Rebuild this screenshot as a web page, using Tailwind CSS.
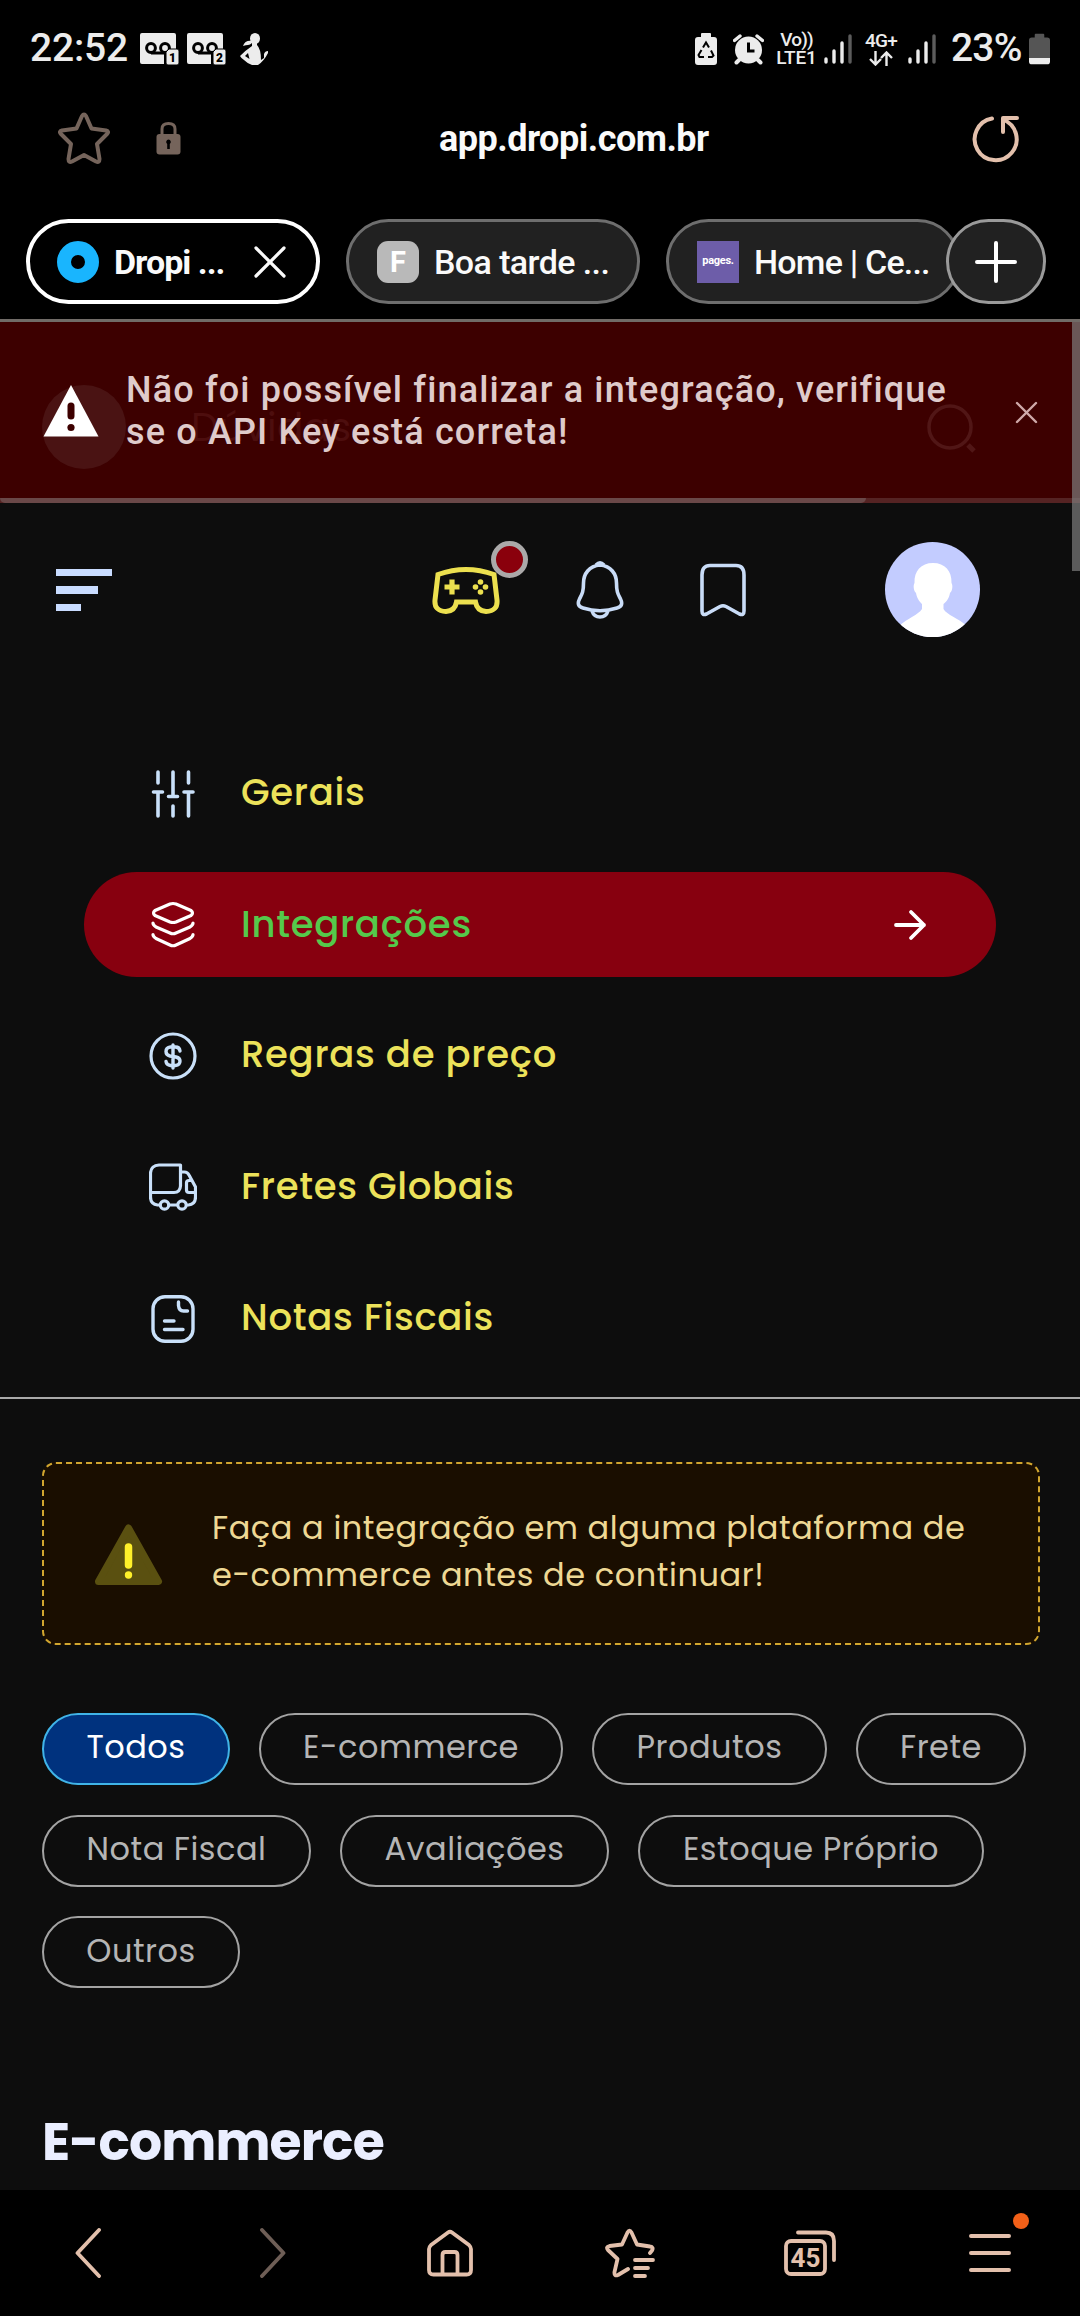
<!DOCTYPE html>
<html lang="pt-BR">
<head>
    <meta charset="UTF-8">
    <meta name="viewport" content="width=device-width, initial-scale=1.0">
    <title>Dropi - Integrações</title>
    <script src="https://cdn.jsdelivr.net/npm/@tailwindcss/browser@4"></script>
</head>
<body class="bg-black">
<div class="w-[1080px] h-[2316px] flex flex-col overflow-hidden bg-black font-['Roboto',sans-serif]">

    <!-- Status bar -->
    <div class="h-[97px] shrink-0 flex items-center pl-[30px] pr-[30px] text-[#ececec]">
        <span class="w-[110px] text-[39px] font-medium tracking-[-0.2px] whitespace-nowrap">22:52</span>
        <svg class="w-[39px] h-[32px]" viewBox="0 0 39 32">
            <path d="M2 0H34Q36 0 36 2V16H27Q24 16 24 19V31H2Q0 31 0 29V2Q0 0 2 0Z" fill="#ececec"/>
            <path d="M11 20H29" stroke="#000" stroke-width="3"/>
            <circle cx="11" cy="15" r="4.4" fill="#ececec" stroke="#000" stroke-width="3"/><circle cx="25" cy="15" r="4.4" fill="#ececec" stroke="#000" stroke-width="3"/>
            <path d="M29 16H37Q39 16 39 18V30Q39 32 37 32H28Q26 32 26 30V19Z" fill="#ececec" stroke="#000" stroke-width="1"/>
            <text x="32.500" y="28.500" font-size="12" font-weight="900" text-anchor="middle" fill="#000">1</text>
        </svg>
        <svg class="ml-[8px] w-[39px] h-[32px]" viewBox="0 0 39 32">
            <path d="M2 0H34Q36 0 36 2V16H27Q24 16 24 19V31H2Q0 31 0 29V2Q0 0 2 0Z" fill="#ececec"/>
            <path d="M11 20H29" stroke="#000" stroke-width="3"/>
            <circle cx="11" cy="15" r="4.4" fill="#ececec" stroke="#000" stroke-width="3"/><circle cx="25" cy="15" r="4.4" fill="#ececec" stroke="#000" stroke-width="3"/>
            <path d="M29 16H37Q39 16 39 18V30Q39 32 37 32H28Q26 32 26 30V19Z" fill="#ececec" stroke="#000" stroke-width="1"/>
            <text x="32.500" y="28.500" font-size="12" font-weight="900" text-anchor="middle" fill="#000">2</text>
        </svg>
        <svg class="ml-[14px] w-[28px] h-[32px]" viewBox="0 0 28 32" fill="#ececec">
            <ellipse cx="15" cy="5.500" rx="5" ry="5.500"/>
            <path d="M12 8Q5 7 3 13Q6 12 8 12Q10 12 12 10V13Q6 17 0 23Q1 25 4 27Q8 31 12 32H18Q24 28 28 20V18Q25 18 24 21V25L21 27Q21 16 17 12V8Z"/>
            <path d="M5 23L8 20L9.500 26Z" fill="#000"/>
        </svg>

        <svg class="ml-auto w-[22px] h-[32px]" viewBox="0 0 22 32">
            <path d="M7 0H15Q16 0 16 1V4H19Q22 4 22 7V29Q22 32 19 32H3Q0 32 0 29V7Q0 4 3 4H6V1Q6 0 7 0Z" fill="#ececec"/>
            <path d="M8 14.500L11 9.500L14 14.500M16 17.500L18.500 22.500L17 24H13M9 24H4.500L3.500 22L6.500 17" fill="none" stroke="#000" stroke-width="2"/>
        </svg>
        <svg class="ml-[16px] w-[31px] h-[32px]" viewBox="0 0 31 32" fill="none">
            <circle cx="15.500" cy="17" r="13.500" fill="#ececec"/>
            <path d="M1.500 7.500L7 3M29.500 7.500L24 3" stroke="#ececec" stroke-width="3.400" stroke-linecap="round"/>
            <path d="M6 27L3.500 29.500M25 27L27.500 29.500" stroke="#ececec" stroke-width="4" stroke-linecap="round"/>
            <path d="M15.500 9.500V18H21.500" stroke="#000" stroke-width="3"/>
        </svg>
        <div class="ml-[12px] w-[41px] flex flex-col items-center font-medium leading-[18px] whitespace-nowrap">
            <span class="text-[19px] tracking-[-0.8px]">Vo))</span>
            <span class="text-[19px] tracking-[-0.2px]">LTE1</span>
        </div>
        <svg class="ml-[7px] mr-[1px] w-[28px] h-[32px]" viewBox="0 0 28 32" stroke-width="3.400" stroke-linecap="round" stroke="#ececec">
            <path d="M2 26V29M10 18V29M18 10V29"/><path d="M26 3V29" stroke="#5c5c5c"/>
        </svg>
        <div class="ml-[11px] w-[34px] flex flex-col items-center font-medium">
            <span class="text-[19px] leading-[18px] tracking-[-0.8px]">4G+</span>
            <svg class="mt-[1px] w-[24px] h-[15px]" viewBox="0 0 24 15" fill="none" stroke="#ececec" stroke-width="2.400"><path d="M6.500 0V13M1 8L6.500 13.500L12 8M17.500 15V2M12 7L17.500 1.500L23 7"/></svg>
        </div>
        <svg class="ml-[10px] w-[28px] h-[32px]" viewBox="0 0 28 32" stroke-width="3.400" stroke-linecap="round" stroke="#ececec">
            <path d="M2 26V29M10 18V29M18 10V29"/><path d="M26 3V29" stroke="#5c5c5c"/>
        </svg>
        <span class="ml-[15px] w-[72px] text-[39px] font-medium tracking-[-0.8px] whitespace-nowrap">23%</span>
        <svg class="ml-[6px] w-[21px] h-[32px]" viewBox="0 0 22 32">
            <path d="M7 0H15Q16 0 16 1V4H19Q22 4 22 7V26H0V7Q0 4 3 4H6V1Q6 0 7 0Z" fill="#555"/>
            <path d="M0 25.500H22V29Q22 32 19 32H3Q0 32 0 29Z" fill="#ececec"/>
        </svg>
    </div>

    <!-- Address bar -->
    <div class="h-[82px] shrink-0 flex items-center pl-[58px] pr-[58px]">
        <svg class="w-[52px] h-[52px]" viewBox="0 0 52 52" fill="none" stroke="#75645b" stroke-width="4" stroke-linejoin="round">
            <path d="M24 4Q26 1 28 4L33.500 16.500L48 18.500Q51.500 19.500 49 22L39 32L41.500 47Q41.500 51 38 49.500L26 43L14 49.500Q10.500 51 10.500 47L13 32L3 22Q0.500 19.500 4 18.500L18.500 16.500Z"/>
        </svg>
        <svg class="ml-[46px] w-[25px] h-[34px]" viewBox="0 0 25 34">
            <path d="M6 15V8Q6 2.500 12.500 2.500T19 8V15" fill="none" stroke="#75645b" stroke-width="3"/>
            <rect x="0.500" y="13" width="24" height="20.500" rx="3" fill="#75645b"/>
            <path d="M12.500 18.500A2.500 2.500 0 0 1 13.800 23V28H11.200V23A2.500 2.500 0 0 1 12.500 18.500Z" fill="#000"/>
        </svg>
        <span class="ml-[258px] mt-[1px] text-[36px] font-bold tracking-[-0.5px] text-[#fafafa] whitespace-nowrap">app.dropi.com.br</span>
        <svg class="ml-auto mt-[1px] w-[50px] h-[50px]" viewBox="0 0 50 50" fill="none" stroke="#e3c0ac" stroke-width="4" stroke-linecap="round" stroke-linejoin="round">
            <path d="M20 4.500A21 21 0 1 0 31 5.500M31 18V4H45"/>
        </svg>
    </div>

    <!-- Tabs -->
    <div class="relative h-[143px] shrink-0 flex gap-[26px] pt-[40px] pl-[26px] border-b-3 border-[#706b67] text-[34px] text-[#fafafa] font-medium">
        <div class="w-[294px] h-[85px] shrink-0 flex items-center rounded-full border-4 border-white pl-[27px]">
            <svg class="w-[42px] h-[42px]" viewBox="0 0 42 42"><circle cx="21" cy="21" r="14" fill="none" stroke="#19b5fe" stroke-width="14"/></svg>
            <span class="ml-[15px] mt-[1px] w-[125px] font-bold tracking-[-1px] whitespace-nowrap">Dropi ...</span>
            <svg class="ml-[15px] w-[32px] h-[32px]" viewBox="0 0 32 32" stroke="#fafafa" stroke-width="3.200" stroke-linecap="round"><path d="M2 2L30 30M30 2L2 30"/></svg>
        </div>
        <div class="w-[294px] h-[85px] shrink-0 flex items-center rounded-full border-3 border-[#6e6e6e] bg-[#212121] pl-[28px]">
            <span class="w-[42px] h-[42px] rounded-[11px] bg-[#b9b9b9] text-center text-[29px] leading-[42px] font-bold text-white">F</span>
            <span class="ml-[15px] mt-[1px] tracking-[-0.6px] whitespace-nowrap">Boa tarde ...</span>
        </div>
        <div class="w-[294px] h-[85px] shrink-0 flex items-center rounded-full border-3 border-[#6e6e6e] bg-[#212121] pl-[28px]">
            <span class="w-[42px] h-[42px] bg-[#6d5da9] text-center text-[11px] leading-[40px] font-bold text-white tracking-[-0.3px]">pages.</span>
            <span class="ml-[15px] mt-[1px] tracking-[-0.8px] whitespace-nowrap">Home | Ce...</span>
        </div>
        <div class="absolute left-[946px] top-[40px] w-[100px] h-[85px] flex items-center justify-center rounded-full border-3 border-[#9a9a9a] bg-[#212121]">
            <svg class="w-[42px] h-[42px]" viewBox="0 0 42 42" stroke="#fff" stroke-width="4" stroke-linecap="round"><path d="M21 2V40M2 21H40"/></svg>
        </div>
    </div>

    <!-- Web page -->
    <main class="relative flex-1 flex flex-col min-h-0 overflow-hidden bg-[#0d0d0d] font-['Poppins','Inter',sans-serif]">

        <!-- Search row, under the error toast -->
        <div class="h-[181px] shrink-0 flex items-start bg-[#3d0000] pt-[63px] pl-[42px]">
            <div class="w-[84px] h-[84px] rounded-full bg-[#4a1313]"></div>
            <span class="ml-[65px] mt-[19px] text-[39px] leading-[48px] tracking-[0.5px] text-[#4d0e0e]">Dúvidas</span>
            <svg class="ml-auto mr-[104px] mt-[17px] w-[50px] h-[52px]" viewBox="0 0 50 52" fill="none" stroke="#511616" stroke-width="3.500"><circle cx="24" cy="25" r="21"/><path d="M42 43L48 49" stroke-width="5"/></svg>
        </div>

        <!-- Error toast -->
        <div class="absolute left-0 top-0 w-full h-[181px] flex font-['Roboto',sans-serif]">
            <svg class="mt-[62px] ml-[43px] w-[56px] h-[53px]" viewBox="0 0 56 53">
                <path d="M28 1L55.500 52.500H0.500Z" fill="#fff"/>
                <path d="M28 22V32" stroke="#3d0000" stroke-width="7" stroke-linecap="round"/><circle cx="28" cy="43.500" r="3.600" fill="#3d0000"/>
            </svg>
            <p class="mt-[47px] ml-[27px] text-[36px] leading-[42px] font-medium tracking-[1.150px] text-[#dfcbcb] whitespace-nowrap">Não foi possível finalizar a integração, verifique<br>se o API Key está correta!</p>
            <svg class="absolute left-[1015px] top-[79px] w-[23px] h-[23px]" viewBox="0 0 23 23" stroke="#cfa9a9" stroke-width="2.400" stroke-linecap="round"><path d="M2 2L21 21M21 2L2 21"/></svg>
            <div class="absolute left-0 bottom-0 w-full h-[5px] bg-[#552323]">
                <div class="w-[866px] h-full rounded-b-[5px] bg-[#6a4848]"></div>
            </div>
        </div>
        <div class="absolute right-0 top-0 w-[8px] h-[249px] bg-[#808080]/68"></div>

        <!-- Top bar -->
        <header class="h-[173px] shrink-0 flex items-center pl-[56px]">
            <div class="mt-[1px] flex flex-col gap-[10px]">
                <span class="w-[56px] h-[7.500px] bg-[#c9dcff]"></span>
                <span class="w-[42px] h-[7.500px] bg-[#c9dcff]"></span>
                <span class="w-[25px] h-[7.500px] bg-[#c9dcff]"></span>
            </div>
            <div class="relative ml-[320px]">
                <svg class="w-[68px] h-[48px]" viewBox="0 0 68 48" fill="none" stroke="#ece04f" stroke-width="5">
                    <path d="M6 8.500Q34 -1.500 62 8.500L65 34Q66 45 54 45.500Q45 45 43.500 36H24.500Q23 45 14 45.500Q2 45 3 34Z"/>
                    <path d="M12.500 21H27.500M20 13.500V28.500" stroke-width="5.200"/>
                    <g fill="#ece04f" stroke="none"><circle cx="48.500" cy="16" r="2.800"/><circle cx="48.500" cy="26" r="2.800"/><circle cx="43.500" cy="21" r="2.800"/><circle cx="53.500" cy="21" r="2.800"/></g>
                </svg>
                <span class="absolute left-[59px] top-[-25px] w-[37px] h-[37px] rounded-full border-5 border-[#aba9a9] bg-[#8a000c]"></span>
            </div>
            <svg class="ml-[76px] w-[48px] h-[58px]" viewBox="0 0 48 58" fill="none" stroke="#c9dcf7" stroke-width="3.600" stroke-linejoin="round">
                <path d="M24 4C13 5 7.500 13 7.500 22C7.500 31 6 33 3.500 38Q0 45 7 47C18 50.500 30 50.500 41 47Q48 45 44.500 38C42 33 40.500 31 40.500 22C40.500 13 35 5 24 4Z"/>
                <path d="M20 4Q24 0 28 4M16 50Q18 56 24 56T32 50"/>
            </svg>
            <svg class="ml-[75px] w-[48px] h-[54px]" viewBox="0 0 48 54" fill="none" stroke="#c9dcf7" stroke-width="3.600" stroke-linejoin="round">
                <path d="M11 2.500H37Q45 2.500 45 12V48Q45 53 40.500 51L27 43.500Q24 42 21 43.500L7.500 51Q3 53 3 48V12Q3 2.500 11 2.500Z"/>
            </svg>
            <svg class="ml-[138px] w-[95px] h-[95px] rounded-full" viewBox="0 0 95 95">
                <rect width="95" height="95" fill="#c3ccff"/>
                <path d="M48 21C36 21 29 29 29.500 41C28 43 28.500 49 31 51C32 57 35 60 37 62V67C33 73 23 76 14 84V95H82V84C73 76 62 73 58.500 67V62C61 60 64 57 65 51C67.500 49 68 43 66.500 41C67 29 60 21 48 21Z" fill="#fff"/>
            </svg>
        </header>

        <!-- Settings menu -->
        <nav class="h-[723px] shrink-0 pt-[65px] px-[84px] border-b-2 border-[#a9a9a9] flex flex-col gap-[26.300px] text-[37px] font-medium tracking-[0.7px] text-[#ece25a] whitespace-nowrap">
            <a class="h-[105px] shrink-0 flex items-center pl-[65px] gap-[44px]">
                <svg class="w-[48px] h-[48px]" viewBox="0 0 48 48" fill="none" stroke="#c9e0f9" stroke-width="3.600" stroke-linecap="round">
                    <path d="M9 2V13M9 22V46M4.500 22H13.500M24 2V26M19.500 26.500H28.500M24 36V46M39.500 2V13M39.500 22V46M35 22H44"/>
                </svg>
                <span class="mb-[1px]">Gerais</span>
            </a>
            <a class="h-[105px] shrink-0 flex items-center pl-[65px] pr-[69px] gap-[44px] rounded-full bg-[#87000f] text-[#55c94b]">
                <svg class="w-[48px] h-[48px]" viewBox="0 0 48 48" fill="none" stroke="#fff" stroke-width="3.200" stroke-linecap="round" stroke-linejoin="round">
                    <path d="M21 3Q24 2 27 3L42 9.500Q45 12 42 14.500L27 21Q24 22 21 21L6 14.500Q3 12 6 9.500ZM4 22Q4 24 7 26L21 32Q24 33.500 27 32L41 26Q44 24 44 22M4 33.500Q4 35.500 7 37.500L21 44Q24 45.500 27 44L41 37.500Q44 35.500 44 33.500"/>
                </svg>
                <span class="mb-[1px]">Integrações</span>
                <svg class="ml-auto w-[34px] h-[34px]" viewBox="0 0 34 34" fill="none" stroke="#fff" stroke-width="3.800" stroke-linecap="round" stroke-linejoin="round"><path d="M3 17H31M18 4L31 17L18 30"/></svg>
            </a>
            <a class="h-[105px] shrink-0 flex items-center pl-[65px] gap-[44px]">
                <svg class="w-[48px] h-[48px]" viewBox="0 0 48 48" fill="none" stroke="#c9e0f9" stroke-width="3.200" stroke-linecap="round">
                    <circle cx="24" cy="24" r="22"/>
                    <path d="M31 19Q30.500 15 26.500 15H21.500Q17 15.500 17 19.500Q17 23 21 24L27 25Q31 26 31 29Q31 33 26.500 33.500H21.500Q17.500 33 17 29.500M24 13V36" stroke-width="3.400"/>
                </svg>
                <span class="mb-[2px]">Regras de preço</span>
            </a>
            <a class="h-[105px] shrink-0 flex items-center pl-[65px] gap-[44px]">
                <svg class="w-[48px] h-[48px]" viewBox="0 0 48 48" fill="none" stroke="#c9e0f9" stroke-width="3.200" stroke-linecap="round" stroke-linejoin="round">
                    <path d="M10 42H8.500Q1.500 41 1.500 34V10Q2 2.500 10 2H31.500V23Q31 29.500 25 29.500H2M31.500 9H35.500Q38.500 9 40 12L46.500 24V34Q46.500 41.500 39.500 42H38.500M28 42H20.500M41.500 17.500H40Q37.500 17.500 37.500 20V27Q37.500 29.500 40 29.500H46"/>
                    <circle cx="15.500" cy="42" r="4.200"/><circle cx="33" cy="42" r="4.200"/>
                </svg>
                <span class="mb-[1px]">Fretes Globais</span>
            </a>
            <a class="h-[105px] shrink-0 flex items-center pl-[65px] gap-[44px]">
                <svg class="w-[48px] h-[48px]" viewBox="0 0 48 48" fill="none" stroke="#c9e0f9" stroke-width="3.400" stroke-linecap="round">
                    <rect x="4" y="1.800" width="40" height="44.400" rx="12"/>
                    <path d="M29.500 7V10.500Q30 16 34.500 16H38.500M15.500 26H25M15.500 34.500H34"/>
                </svg>
                <span class="mb-[1px]">Notas Fiscais</span>
            </a>
        </nav>

        <!-- Warning -->
        <div class="mt-[63px] ml-[42px] w-[998px] h-[183px] shrink-0 flex items-center rounded-[14px] border-2 border-dashed border-[#d2a62f] bg-[#1a0e00] pl-[50px]">
            <svg class="mt-[2px] w-[69px] h-[63px]" viewBox="0 0 69 63">
                <path d="M34.500 5L64.500 58.500H4.500Z" fill="#5a5010" stroke="#5a5010" stroke-width="7" stroke-linejoin="round"/>
                <path d="M34.500 24V42" stroke="#fff02a" stroke-width="7.500" stroke-linecap="round"/><circle cx="34.500" cy="52" r="3.700" fill="#fff02a"/>
            </svg>
            <p class="ml-[49px] mb-[5px] text-[32px] leading-[47px] tracking-[0.550px] text-[#eed894] whitespace-nowrap">Faça a integração em alguma plataforma de<br>e-commerce antes de continuar!</p>
        </div>

        <!-- Filters -->
        <div class="mt-[68px] ml-[42px] shrink-0 flex flex-col gap-[29.500px] text-[32px] tracking-[0.500px] text-[#b5b5b5]">
            <div class="flex gap-[29px]">
                <button class="w-[188px] h-[72px] pb-[4px] rounded-full border-2 border-[#40b4e8] bg-[#00327e] text-white">Todos</button>
                <button class="w-[304px] h-[72px] pb-[4px] rounded-full border-2 border-[#a3a3a3]">E-commerce</button>
                <button class="w-[235px] h-[72px] pb-[4px] rounded-full border-2 border-[#a3a3a3]">Produtos</button>
                <button class="w-[170px] h-[72px] pb-[4px] rounded-full border-2 border-[#a3a3a3]">Frete</button>
            </div>
            <div class="flex gap-[29px]">
                <button class="w-[269px] h-[72px] pb-[4px] rounded-full border-2 border-[#a3a3a3]">Nota Fiscal</button>
                <button class="w-[269px] h-[72px] pb-[4px] rounded-full border-2 border-[#a3a3a3]">Avaliações</button>
                <button class="w-[346px] h-[72px] pb-[4px] rounded-full border-2 border-[#a3a3a3]">Estoque Próprio</button>
            </div>
            <div class="flex">
                <button class="w-[198px] h-[72px] pb-[3px] rounded-full border-2 border-[#a3a3a3]">Outros</button>
            </div>
        </div>

        <h2 class="mt-[121px] ml-[42px] text-[52px] leading-[66px] font-bold tracking-[-0.9px] text-[#eaeeff]">E-commerce</h2>
    </main>

    <!-- Browser toolbar -->
    <footer class="h-[126px] shrink-0 grid grid-cols-6 items-center justify-items-center bg-black">
        <svg class="mr-[4px] w-[26px] h-[50px]" viewBox="0 0 26 50" fill="none" stroke="#e3c0ac" stroke-width="3.800" stroke-linecap="round" stroke-linejoin="round"><path d="M24 2L2.500 25L24 48"/></svg>
        <svg class="ml-[6px] w-[26px] h-[50px]" viewBox="0 0 26 50" fill="none" stroke="#6e5e56" stroke-width="3.800" stroke-linecap="round" stroke-linejoin="round"><path d="M2 2L23.500 25L2 48"/></svg>
        <svg class="w-[46px] h-[48px]" viewBox="0 0 46 48" fill="none" stroke="#e3c0ac" stroke-width="3.800" stroke-linejoin="round">
            <path d="M21 3.500Q23 2 25 3.500L42 16Q44 18 44 20V41Q44 45.500 39.500 45.500H6.500Q2 45.500 2 41V20Q2 18 4 16ZM15.500 45V26Q15.500 23 18.500 23H27.500Q30.500 23 30.500 26V45"/>
        </svg>
        <svg class="w-[50px] h-[50px]" viewBox="0 0 50 50" fill="none" stroke="#e3c0ac" stroke-width="3.800" stroke-linecap="round" stroke-linejoin="round">
            <path d="M23 41L13 47Q9 48.500 9.500 44L12.500 31L3 22Q0.500 19 4.500 18L17 16.500L22.500 4.500Q24.500 1 26.500 4.500L32 16.500L45 18.500Q49 19 47 22.500L45 25M30 32H48M30 40H43M30 48H40"/>
        </svg>
        <svg class="w-[52px] h-[46px]" viewBox="0 0 52 46" fill="none" stroke="#e3c0ac" stroke-width="3.800" stroke-linecap="round">
            <rect x="2" y="11" width="39" height="33" rx="5"/><path d="M14 2.500H42Q50 2.500 50 11V30"/>
            <text x="21.500" y="36.500" font-size="26" font-weight="700" text-anchor="middle" fill="#e3c0ac" stroke="none">45</text>
        </svg>
        <div class="relative">
            <svg class="w-[42px] h-[40px]" viewBox="0 0 42 40" stroke="#e3c0ac" stroke-width="4" stroke-linecap="round"><path d="M2 3H40M2 20H40M2 37H40"/></svg>
            <span class="absolute left-[44px] top-[-20px] w-[16px] h-[16px] rounded-full bg-[#f26018]"></span>
        </div>
    </footer>
</div>
</body>
</html>
